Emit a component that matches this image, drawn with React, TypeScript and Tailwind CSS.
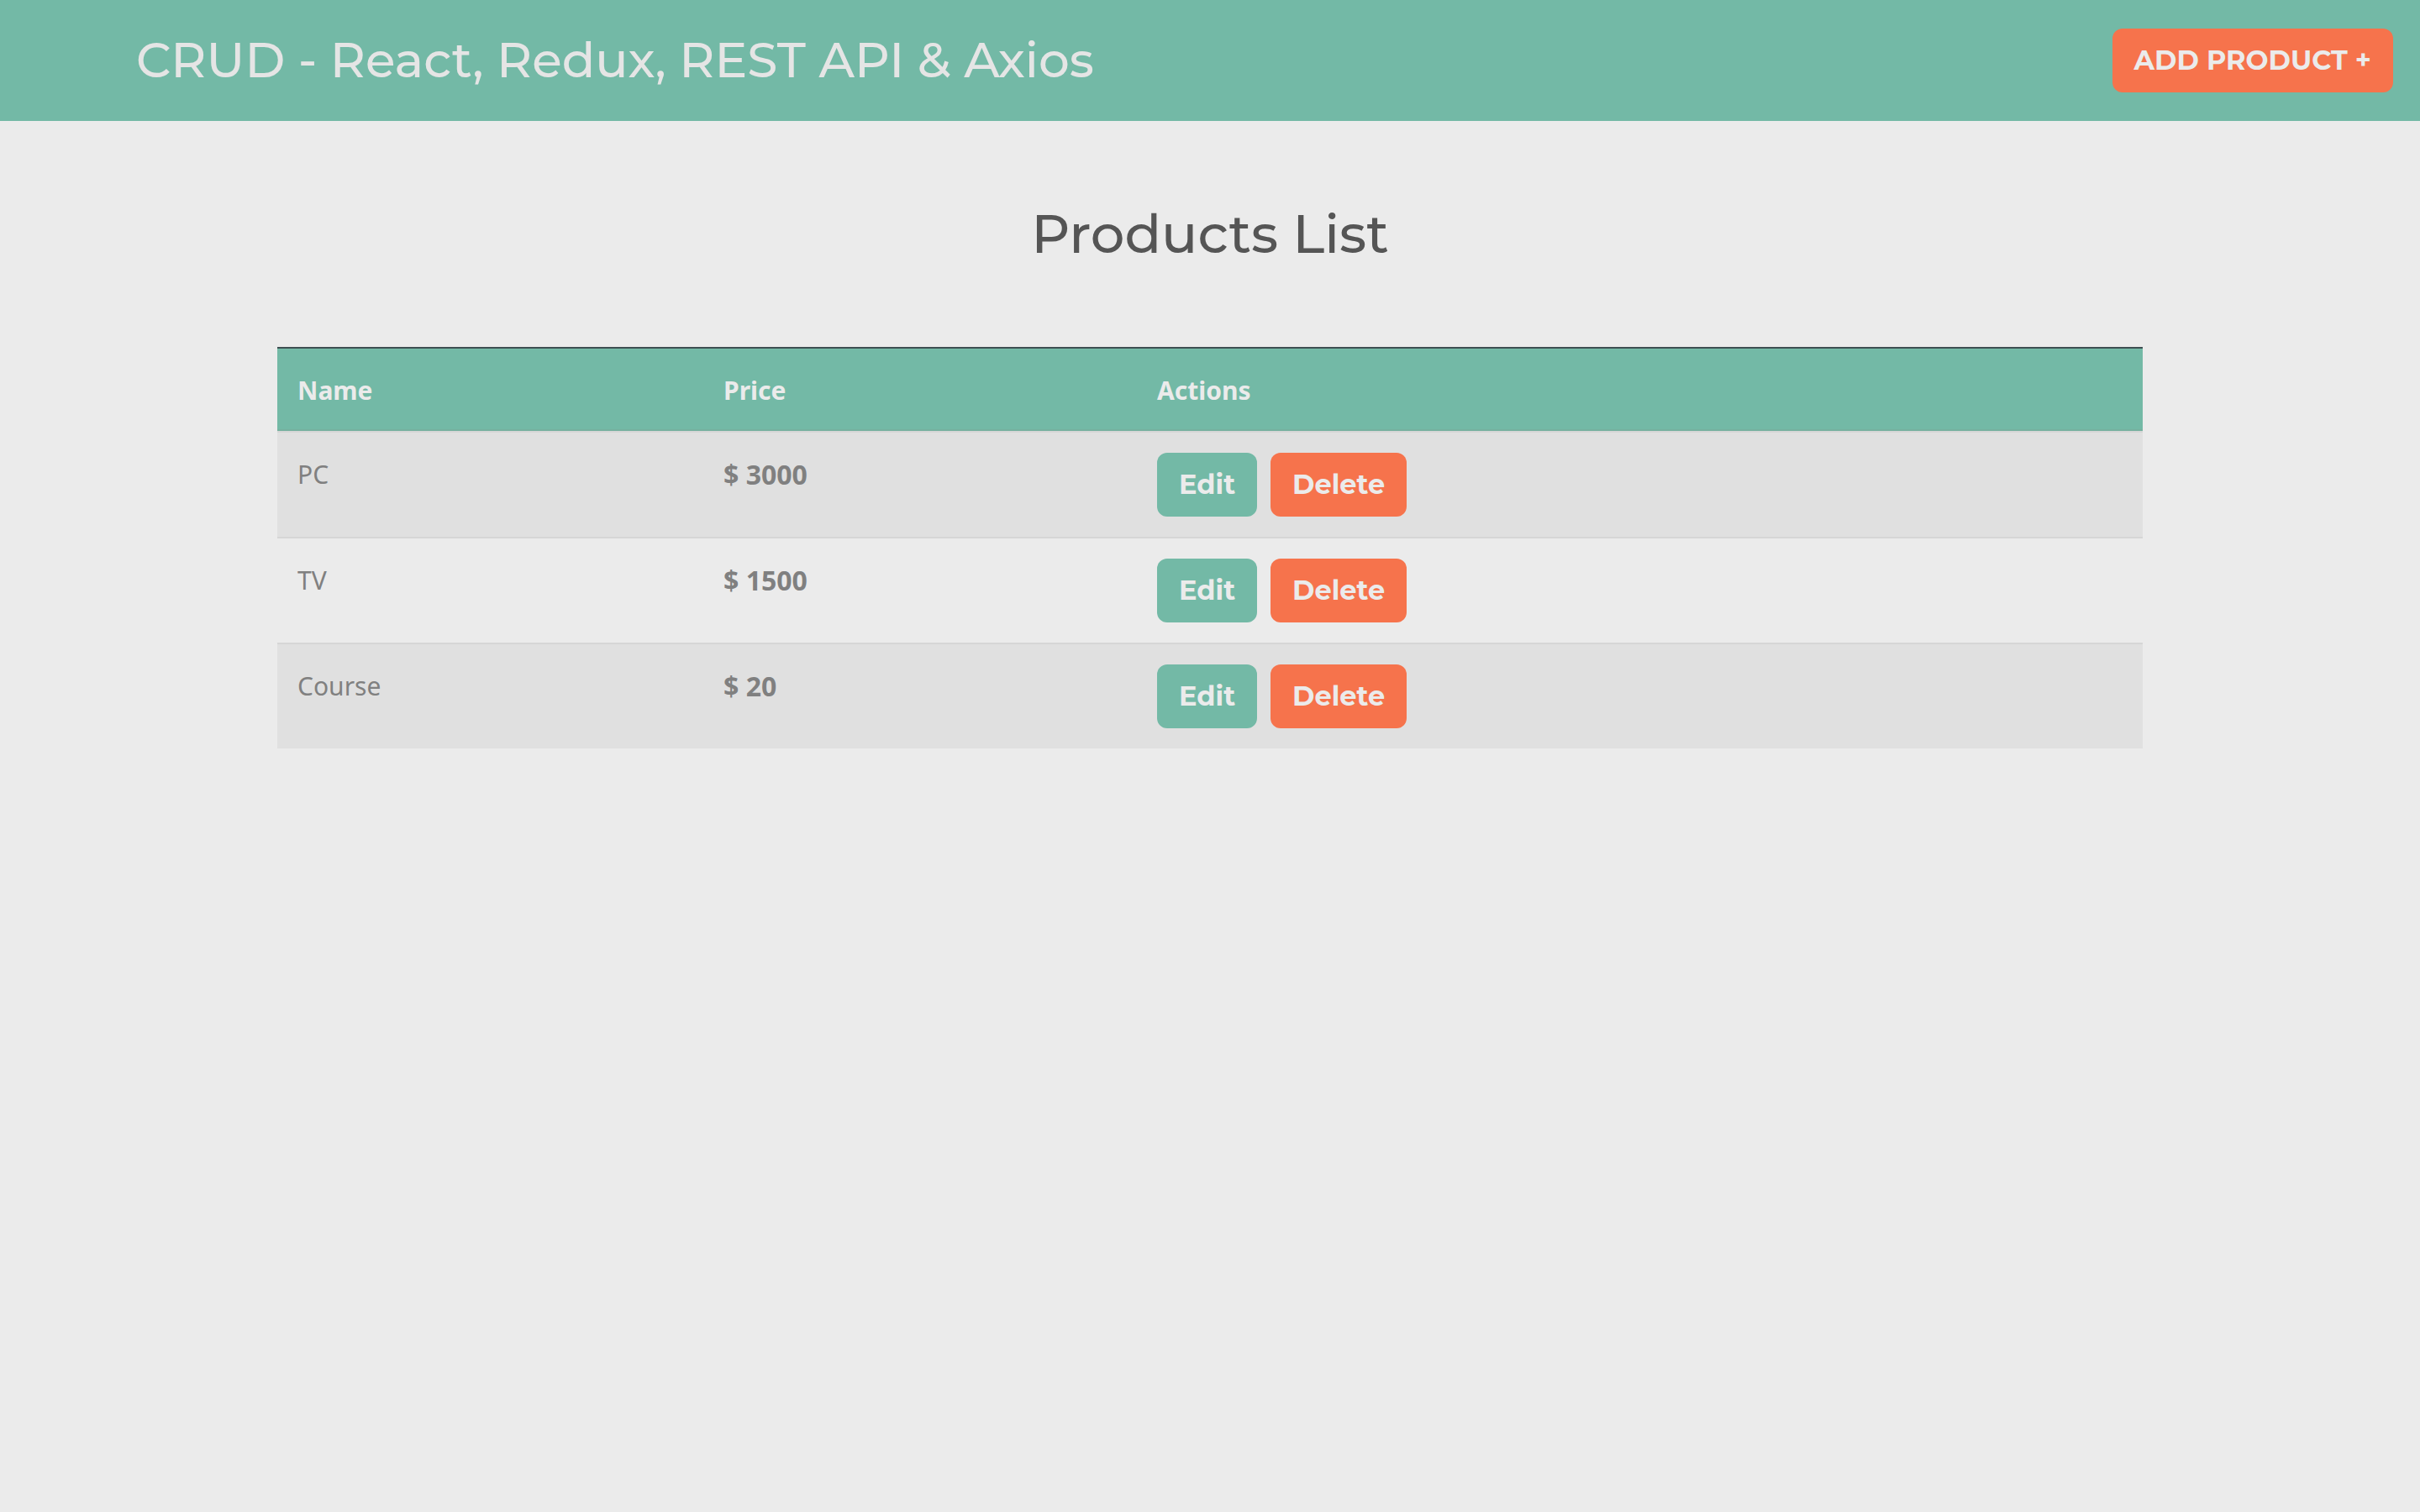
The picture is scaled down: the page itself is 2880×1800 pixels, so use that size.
const products = [
  { id: 1, name: "PC", price: 3000 },
  { id: 2, name: "TV", price: 1500 },
  { id: 3, name: "Course", price: 20 },
];

const button =
  "rounded-xl px-[26px] h-[76px] font-['Montserrat',Inter,sans-serif] text-[32px] leading-[48px] font-bold text-[#ebebeb] cursor-pointer";

const headCell =
  "border-t-2 border-b-2 border-t-[#3e4f52] border-b-[#76b09f] px-6 pt-6 pb-5 font-bold";

const textCell = "border-t-2 border-[#d6d6d6] px-6 pt-6 pb-5";

export default function App() {
  return (
    <div className="min-h-screen bg-[#ebebeb] font-['Noto_Sans',sans-serif] text-[#808080]">
      <header className="flex items-center justify-between bg-[#73b9a6] py-[34px] pr-8 pl-[162px]">
        <h1 className="font-['Montserrat',Inter,sans-serif] text-[58px] leading-[76px] font-medium text-[#e5e5e5]">
          <a href="#">CRUD - React, Redux, REST API &amp; Axios</a>
        </h1>
        <button type="button" className={`${button} bg-[#f6734c]`}>ADD PRODUCT +</button>
      </header>
      <main className="mx-auto w-full max-w-[2280px] px-[30px]">
        <h2 className="pt-24 pb-[97px] text-center font-['Montserrat',Inter,sans-serif] text-[64px] leading-[76px] font-medium text-[#555555]">
          Products List
        </h2>
        <table className="w-full table-fixed border-separate border-spacing-0 text-left text-[30px] leading-[52px]">
          <colgroup>
            <col className="w-[507px]" />
            <col className="w-[516px]" />
            <col />
          </colgroup>
          <thead className="bg-[#73b9a6] text-[#ebebeb]">
            <tr>
              <th scope="col" className={headCell}>Name</th>
              <th scope="col" className={headCell}>Price</th>
              <th scope="col" className={headCell}>Actions</th>
            </tr>
          </thead>
          <tbody>
            {products.map((p) => (
              <tr key={p.id} className="align-top odd:bg-[#e0e0e0]">
                <td className={textCell}>{p.name}</td>
                <td className={`${textCell} text-[32px] leading-[52px] font-bold`}>$ {p.price}</td>
                <td className="border-t-2 border-[#d6d6d6] p-6">
                  <div className="flex gap-4">
                    <button type="button" className={`${button} bg-[#73b9a6]`}>Edit</button>
                    <button type="button" className={`${button} bg-[#f6734c]`}>Delete</button>
                  </div>
                </td>
              </tr>
            ))}
          </tbody>
        </table>
      </main>
    </div>
  );
}
